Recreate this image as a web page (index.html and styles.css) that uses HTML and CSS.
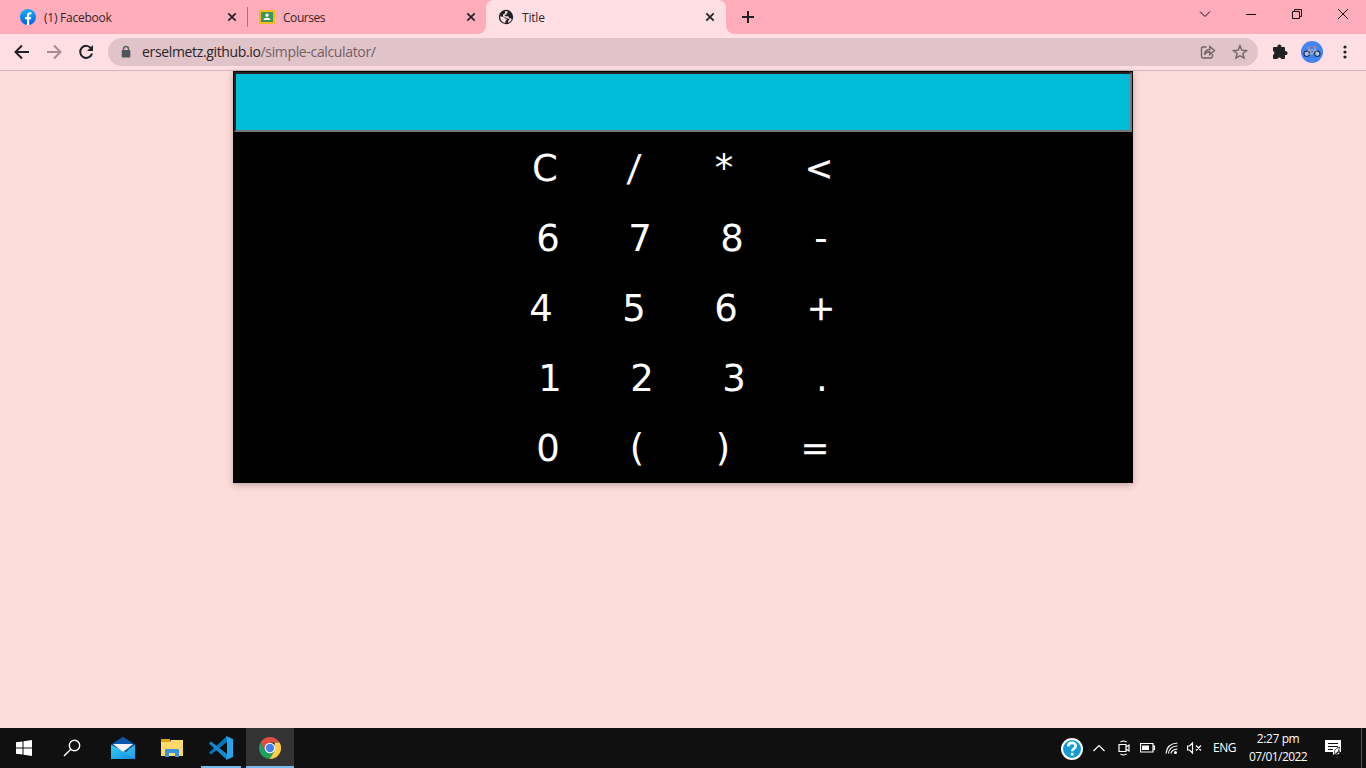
FILE: index.html
```html
<!DOCTYPE html>
<html lang="en">
<head>
<meta charset="utf-8">
<title>Title</title>
<link rel="stylesheet" href="styles.css">
</head>
<body>
<header class="tabs">
  <div class="tab tab-first">
    <svg class="fav" width="16" height="16" viewBox="0 0 16 16"><defs><linearGradient id="fb" x2="0" y2="1"><stop stop-color="#19afff"/><stop offset="1" stop-color="#0062e0"/></linearGradient></defs><circle cx="8" cy="8" r="8" fill="url(#fb)"/><path d="M7 16v-5.700H5V8h2V6.300c0-2 1.200-3.100 3-3.100.8 0 1.400.1 1.400.1v1.900h-1c-1 0-1.200.6-1.200 1.200V8h2.100l-.4 2.300H9.200V16z" fill="#fff"/></svg>
    <span class="tab-name name-facebook">(1) Facebook</span>
    <svg class="close" width="10" height="10" viewBox="0 0 10 10"><path d="M1.300 1.300l7.400 7.400M8.700 1.300L1.300 8.700"/></svg>
  </div>
  <div class="tab tab-second">
    <svg class="fav" width="16" height="16" viewBox="0 0 16 16"><rect y="1" width="16" height="14" rx="1" fill="#f5ba15"/><rect x="2" y="3" width="12" height="10" fill="#3c9659"/><circle cx="8" cy="6.200" r="1.600" fill="#fff"/><path d="M4.500 11c0-3 7-3 7 0z" fill="#fff"/></svg>
    <span class="tab-name name-courses">Courses</span>
    <svg class="close" width="10" height="10" viewBox="0 0 10 10"><path d="M1.300 1.300l7.400 7.400M8.700 1.300L1.300 8.700"/></svg>
  </div>
  <div class="tab tab-active">
    <svg class="fav" width="16" height="16" viewBox="0 0 16 16"><circle cx="8" cy="8" r="7.200" fill="#202124"/><path d="M2.200 7.200l3.300.8 1.500 1.500h1.500v1.800l-1.200.9v1.700C4.200 13.400 2 10.800 2.200 7.200zM9.300 2.300l.5.900-1.300 1.300v1.200H6.800v1.500h3.400l1 2h1.700l.8 1.200c-.7 1.600-1.900 2.700-3.500 3.300l-.2-1.700 1.600-1.200-1-1.400H9.200L8 8.500H6L5 7V5.500l2-1V2.300z" fill="#ffdee4"/></svg>
    <span class="tab-name name-title">Title</span>
    <svg class="close" width="10" height="10" viewBox="0 0 10 10"><path d="M1.300 1.300l7.400 7.400M8.700 1.300L1.300 8.700"/></svg>
  </div>
  <svg class="new-tab" width="12" height="12" viewBox="0 0 12 12"><path d="M6 0v12M0 6h12" stroke="#202124" stroke-width="2"/></svg>
  <div class="window-buttons">
    <svg width="12" height="12" viewBox="0 0 12 12"><path d="M1 3.500l5 5 5-5"/></svg>
    <svg width="12" height="12" viewBox="0 0 12 12"><path d="M1 6.500h10"/></svg>
    <svg width="12" height="12" viewBox="0 0 12 12"><path d="M1.500 3.500h7v7h-7zM3.500 3.500v-2h7v7h-2"/></svg>
    <svg width="12" height="12" viewBox="0 0 12 12"><path d="M1 1l10 10M11 1L1 11"/></svg>
  </div>
</header>
<nav class="toolbar">
  <svg class="nav-icon" width="16" height="16" viewBox="0 0 16 16"><path d="M15 8H2M8 1.500L1.500 8 8 14.500"/></svg>
  <svg class="nav-icon forward" width="16" height="16" viewBox="0 0 16 16"><path d="M1 8h13M8 1.500L14.500 8 8 14.500"/></svg>
  <svg class="nav-icon" width="16" height="16" viewBox="0 0 16 16"><path d="M13.200 4.500A6 6 0 1 0 14 9.500"/><path d="M15 1v6H9z" fill="#202124" stroke="none"/></svg>
  <div class="address">
    <svg width="10" height="14" viewBox="0 0 10 14"><path d="M2.500 6V4a2.500 2.500 0 0 1 5 0v2" fill="none" stroke="#5f6368" stroke-width="1.500"/><rect x=".7" y="5" width="8.600" height="7.500" rx="1" fill="#50555a"/></svg>
    <span class="url">erselmetz.github.io<span class="path">/simple-calculator/</span></span>
    <svg class="share" width="16" height="16" viewBox="0 0 16 16"><path d="M6.500 3H3.200C2 3 1.500 3.600 1.500 4.700v7.600c0 1 .6 1.700 1.700 1.700h7.600c1.100 0 1.700-.7 1.700-1.700V10M4.500 10.500c.4-3.200 2-4.900 5.300-5V2.500l4.700 4-4.700 4V7.700c-2.500 0-4 .8-5.300 2.800z"/></svg>
    <svg class="star" width="16" height="16" viewBox="0 0 16 16"><path d="M8 1.800l1.800 4.300 4.700.4-3.600 3 1.100 4.600L8 11.700l-4 2.400 1.100-4.600-3.600-3 4.700-.4z"/></svg>
  </div>
  <svg class="puzzle" width="16" height="16" viewBox="0 0 16 16"><path d="M1 5V4q0-1 1-1h3.500a2 2 0 1 1 3.800 0H12q1 0 1 1v3.200a2 2 0 1 1 0 3.800v3q0 1-1 1H9.200a2 2 0 0 0-3.800 0H2q-1 0-1-1v-3.200a2 2 0 0 0 0-3.800z" fill="#202124"/></svg>
  <svg class="avatar" width="22" height="22" viewBox="0 0 22 22"><circle cx="11" cy="11" r="11" fill="#4285f4"/><circle cx="5.700" cy="12.800" r="2.700" fill="#a9c5eb" stroke="#22314b" stroke-width="1.100"/><circle cx="16.300" cy="12.800" r="2.700" fill="#a9c5eb" stroke="#22314b" stroke-width="1.100"/><path d="M5.700 12.800L8 9h6l-3 4zM8 8l3 5M13.500 6.500l2.800 6.300" fill="none" stroke="#d9b6b4" stroke-width=".8"/><path d="M6.300 7h3M12.500 6h2.500" stroke="#ff7043" stroke-width="1.600"/></svg>
  <svg class="more" width="4" height="14" viewBox="0 0 4 14"><circle cx="2" cy="2" r="1.600"/><circle cx="2" cy="7" r="1.600"/><circle cx="2" cy="12" r="1.600"/></svg>
</nav>
<main class="page">
  <section class="calculator">
    <div class="display"></div>
    <div class="keys row-one"><span>C</span><span class="slash">/</span><span>*</span><span class="operator">&lt;</span></div>
    <div class="keys row-two"><span>6</span><span>7</span><span>8</span><span>-</span></div>
    <div class="keys row-three"><span>4</span><span>5</span><span>6</span><span class="operator">+</span></div>
    <div class="keys row-four"><span>1</span><span>2</span><span>3</span><span>.</span></div>
    <div class="keys row-five"><span>0</span><span>(</span><span>)</span><span class="operator">=</span></div>
  </section>
</main>
<footer class="taskbar">
  <div class="task start"><svg width="16" height="16" viewBox="0 0 16 16" fill="#fff"><path d="M0 2.300L6.500 1.400V7.500H0zM7.500 1.200L16 0v7.500H7.500zM0 8.500h6.500v6.100L0 13.700zM7.500 8.500H16V16l-8.500-1.200z"/></svg></div>
  <div class="task"><svg width="18" height="18" viewBox="0 0 18 18" fill="none" stroke="#fff" stroke-width="1.400"><circle cx="11.500" cy="6.500" r="5.200"/><path d="M7.800 10.200L1 17"/></svg></div>
  <div class="task mail"><svg width="24" height="24" viewBox="0 0 24 24"><defs><linearGradient id="ml" x2="1" y2="1"><stop stop-color="#35cdf7"/><stop offset="1" stop-color="#168bdd"/></linearGradient></defs><path d="M0 8.500L12 .8l12 7.700V14H0z" fill="#0858ab"/><path d="M0 9v14h24V9l-9 7z" fill="url(#ml)"/><path d="M2 8h20l-9 7.200q-1 .8-2 0z" fill="#f5f5f5"/><path d="M24 9v14L12 15.500z" fill="#40c8f8" opacity=".35"/></svg></div>
  <div class="task"><svg width="22" height="20" viewBox="0 0 22 20"><path d="M0 1h9v3H0z" fill="#e8a313"/><path d="M0 4h9l1-2h12v16H0z" fill="#ffda6b"/><path d="M4 19v-7q0-1 1-1h12q1 0 1 1v7h-4v-4H8v4z" fill="#3993dc"/></svg></div>
  <div class="task running"><svg width="24" height="24" viewBox="0 0 24 24"><path d="M18 6L2 18.500 0 16.500 17.500.5z" fill="#0078bd"/><path d="M18 18L2 5.500 0 7.500l17.500 16z" fill="#148bd1"/><path d="M17 0l7 3v18l-7 3 1-6V6z" fill="#26a5ee"/></svg></div>
  <div class="task running current"><svg width="22" height="22" viewBox="0 0 22 22"><path d="M1.500 5.500a11 11 0 0 1 19 0H11L6.200 13.700z" fill="#dd4f43"/><path d="M20.500 5.500A11 11 0 0 1 10.500 22l5-8.500L15.800 5.500z" fill="#ffce44"/><path d="M1.500 5.500A11 11 0 0 0 10.500 22l5-8.300H6.200z" fill="#1fa15c"/><circle cx="11" cy="11" r="5.300" fill="#fff"/><circle cx="11" cy="11" r="4.200" fill="#477fee"/></svg></div>
  <div class="tray">
    <svg class="help" width="24" height="24" viewBox="0 0 24 24"><circle cx="12" cy="12" r="10" fill="#149bd7" stroke="#fff" stroke-width="2"/><path d="M8.300 9.500c0-5 7.500-4.500 7.500-.5 0 2.500-3.600 2.500-3.600 5.300M12.200 15.700v2.700" fill="none" stroke="#fff" stroke-width="2.600"/></svg>
    <svg class="up" width="12" height="8" viewBox="0 0 12 8"><path d="M.5 7L6 1.500 11.500 7"/></svg>
    <svg class="camera" width="12" height="16" viewBox="0 0 12 16"><path d="M1 4.500h7v7H1zM8 7l3-2v6L8 9M2.500 2q3-2 6 0M2.500 14q3 2 6 0"/></svg>
    <svg class="battery" width="15" height="10" viewBox="0 0 15 10"><path d="M.5.500h12.500v8.500H.5zM13 3h1.500v3.500H13"/><path d="M2 2.500h7v4.500H2z" fill="#fff" stroke="none"/></svg>
    <svg class="wifi" width="14" height="14" viewBox="0 0 14 14"><path d="M1 12.500Q2 2.500 12.500 2M3.500 12.500Q4 5.500 12.500 5M6 12.500Q6.500 8.500 12.500 8"/><circle cx="10.500" cy="11.500" r="1.500" fill="#fff" stroke="none"/></svg>
    <svg class="sound" width="15" height="12" viewBox="0 0 15 12"><path d="M.5 4h2L5.500 1v10l-3-3h-2zM9 3.500l5 5M14 3.500l-5 5"/></svg>
    <span class="language">ENG</span>
    <div class="clock"><span class="time">2:27 pm</span><span class="date">07/01/2022</span></div>
    <svg class="notice" width="17" height="16" viewBox="0 0 17 16"><path d="M0 0h16v12h-4l-4 3v-3H0z" fill="#fff"/><path d="M3 3.500h10M3 6.500h10M3 9.500h5" stroke="#101010"/><path d="M14.500 7c-5 2-6 4-4 7.500 4 1 5-1 3.500-4 0 2-1 3-3 3 2-1 3-3 3.500-6.500z" fill="#fff" stroke="#101010" stroke-width=".8"/></svg>
  </div>
</footer>
</body>
</html>
```
FILE: styles.css
```css
* { box-sizing: border-box; }
body { margin: 0; width: 1366px; height: 768px; overflow: hidden; display: flex; flex-direction: column; background: #ffdcdc; font-family: "Open Sans", "Noto Sans", sans-serif; }
svg { display: block; flex: none; }

.tabs { height: 34px; display: flex; background: #ffadbb; color: #33262a; font-size: 12px; }
.tab { display: flex; align-items: center; position: relative; height: 34px; }
.tab-first { width: 248px; padding: 0 11px 0 20px; }
.tab-first::after { content: ""; position: absolute; right: 0; top: 7px; width: 1px; height: 20px; background: #a5727d; }
.tab-second { width: 238px; padding: 0 10px 0 11px; }
.tab-active { width: 240px; padding: 0 11px 0 12px; background: #ffdee4; border-radius: 8px 8px 0 0; }
.tab-active::before, .tab-active::after { content: ""; position: absolute; bottom: 0; width: 8px; height: 8px; }
.tab-active::before { left: -8px; background: radial-gradient(circle at 0 0, transparent 7.500px, #ffdee4 8px); }
.tab-active::after { right: -8px; background: radial-gradient(circle at 100% 0, transparent 7.500px, #ffdee4 8px); }
.tab-name { margin-left: 8px; white-space: nowrap; line-height: 17px; }
.name-facebook { letter-spacing: -.25px; }
.name-courses { letter-spacing: -.45px; }
.name-title { letter-spacing: -.2px; }
.close { margin-left: auto; fill: none; stroke: #202124; stroke-width: 1.700; }
.new-tab { margin: 11px 0 0 16px; }
.window-buttons { display: flex; gap: 34px; margin: 8px 17px 0 auto; }
.window-buttons svg { fill: none; stroke: #111; stroke-width: 1; }

.toolbar { height: 37px; display: flex; align-items: center; background: #ffdee4; border-bottom: 1px solid #cfb4bd; padding-left: 14px; }
.nav-icon { fill: none; stroke: #202124; stroke-width: 2; margin-right: 16px; }
.forward { stroke: #a58d93; }
.address { width: 1150px; height: 28px; margin-left: -2px; border-radius: 14px; background: #e0c4c9; display: flex; align-items: center; padding: 0 10px 0 13px; }
.url { margin-left: 11px; font-size: 14px; line-height: 20px; letter-spacing: -.35px; color: #292326; }
.path { color: #715f64; }
.share { margin-left: auto; }
.share, .star { fill: none; stroke: #6d6266; stroke-width: 1.400; }
.star { margin-left: 16px; }
.puzzle { margin-left: 14px; }
.avatar { margin-left: 13px; }
.more { margin-left: 19.500px; fill: #202124; }

.page { height: 657px; padding-left: 233px; }
.calculator { width: 900px; height: 412px; padding: 1px 1px 0; background: #000; box-shadow: 0 2px 10px rgba(0, 0, 0, .12), 0 2px 5px rgba(0, 0, 0, .16); }
.display { height: 60px; margin-bottom: 2px; background: #00bcd6; border: 2px solid; border-color: #242424 #767676 #767676 #242424; }
.keys { display: flex; height: 70px; color: #fff; font: 37px/70px "DejaVu Sans", sans-serif; }
.keys span { width: 60px; text-align: center; }
.keys .operator { font-size: 34px; line-height: 69px; -webkit-text-stroke: .3px #fff; }
.keys .slash { transform: skewX(-5deg); }
.row-one { padding-left: 281px; }
.row-one span:nth-child(2) { margin-left: 29px; }
.row-one span:nth-child(3) { margin-left: 30px; }
.row-one span:nth-child(4) { margin-left: 35px; }
.row-two { padding-left: 284px; }
.row-two span + span { margin-left: 32px; }
.row-two span:last-child { margin-left: 29px; }
.row-three { padding-left: 277px; }
.row-three span + span { margin-left: 33px; }
.row-three span:nth-child(3) { margin-left: 32px; }
.row-three span:last-child { margin-left: 35px; }
.row-four { padding-left: 286px; }
.row-four span + span { margin-left: 32px; }
.row-four span:last-child { margin-left: 28px; }
.row-five { padding-left: 284px; }
.row-five span:nth-child(2) { margin-left: 29px; }
.row-five span:nth-child(3) { margin-left: 26px; }
.row-five span:nth-child(4) { margin-left: 32px; }

.taskbar { height: 40px; display: flex; background: #101010; color: #fff; }
.task { width: 48px; height: 40px; display: flex; align-items: center; justify-content: center; }
.mail { margin-left: 3px; }
.task:nth-child(4) { margin-left: 1px; }
.running { width: 40px; margin-left: 5px; border-bottom: 2px solid #76b9ed; padding-top: 2px; }
.current { width: 48px; background: #333; }
.tray { margin-left: auto; width: 306px; display: flex; align-items: center; border-right: 1px solid #555; margin-right: 4px; }
.tray svg { fill: none; stroke: #fff; stroke-width: 1.200; }
.tray .help, .tray .notice { stroke: none; }
.help { margin: 2px 9px 0 4px; }
.camera { margin-left: 13px; }
.battery { margin-left: 10px; }
.wifi { margin-left: 10px; }
.sound { margin-left: 8px; }
.language { font-size: 12px; margin-left: 11px; letter-spacing: -.45px; line-height: 16px; padding-bottom: 1px; }
.clock { width: 62px; margin-left: 11px; display: flex; flex-direction: column; align-items: center; font-size: 12px; line-height: 18px; padding-bottom: 1px; }
.time { letter-spacing: -.4px; }
.date { letter-spacing: -.55px; }
.notice { margin-left: 16px; }
```
